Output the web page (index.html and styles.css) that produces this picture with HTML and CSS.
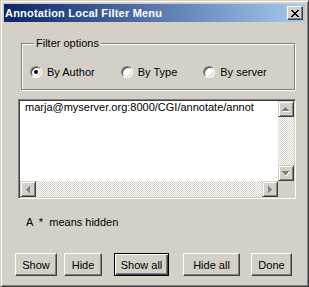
FILE: index.html
```html
<!DOCTYPE html>
<html lang="en">

<head>
    <meta charset="UTF-8">
    <title>Annotation Local Filter Menu</title>
    <link rel="stylesheet" href="styles.css">
</head>

<body>

    <div class="window">
        <div class="titlebar">
            <span class="title">Annotation Local Filter Menu</span>
            <button class="close-btn">
                <svg width="8" height="7" viewBox="0 0 8 7" shape-rendering="crispEdges">
                    <rect x="0" y="0" width="2" height="1" />
                    <rect x="6" y="0" width="2" height="1" />
                    <rect x="1" y="1" width="2" height="1" />
                    <rect x="5" y="1" width="2" height="1" />
                    <rect x="2" y="2" width="4" height="1" />
                    <rect x="3" y="3" width="2" height="1" />
                    <rect x="2" y="4" width="4" height="1" />
                    <rect x="1" y="5" width="2" height="1" />
                    <rect x="5" y="5" width="2" height="1" />
                    <rect x="0" y="6" width="2" height="1" />
                    <rect x="6" y="6" width="2" height="1" />
                </svg>
            </button>
        </div>

        <div class="content">
            <fieldset class="filter-box">
                <legend>Filter options</legend>
                <div class="radio-row">
                    <label class="radio"><span class="radio-mark"><span class="radio-dot"></span></span>By Author</label>
                    <label class="radio"><span class="radio-mark"></span>By Type</label>
                    <label class="radio"><span class="radio-mark"></span>By server</label>
                </div>
            </fieldset>

            <div class="listbox">
                <div class="list-items">
                    <div class="list-item">marja@myserver.org:8000/CGI/annotate/annot</div>
                </div>
                <div class="vscroll">
                    <div class="scroll-btn">
                        <svg width="8" height="5" viewBox="0 0 8 5" shape-rendering="crispEdges">
                            <rect class="arrow-hi" x="4" y="1" width="1" height="1" />
                            <rect class="arrow-hi" x="5" y="2" width="1" height="1" />
                            <rect class="arrow-hi" x="1" y="4" width="7" height="1" />
                            <rect x="3" y="0" width="1" height="1" />
                            <rect x="2" y="1" width="3" height="1" />
                            <rect x="1" y="2" width="5" height="1" />
                            <rect x="0" y="3" width="7" height="1" />
                        </svg>
                    </div>
                    <div class="scroll-track"></div>
                    <div class="scroll-btn">
                        <svg width="8" height="5" viewBox="0 0 8 5" shape-rendering="crispEdges">
                            <rect class="arrow-hi" x="1" y="1" width="7" height="1" />
                            <rect class="arrow-hi" x="6" y="2" width="1" height="1" />
                            <rect class="arrow-hi" x="5" y="3" width="1" height="1" />
                            <rect class="arrow-hi" x="4" y="4" width="1" height="1" />
                            <rect x="0" y="0" width="7" height="1" />
                            <rect x="1" y="1" width="5" height="1" />
                            <rect x="2" y="2" width="3" height="1" />
                            <rect x="3" y="3" width="1" height="1" />
                        </svg>
                    </div>
                </div>
                <div class="hscroll">
                    <div class="scroll-btn">
                        <svg width="4" height="7" viewBox="0 0 4 7" shape-rendering="crispEdges">
                            <rect x="3" y="0" width="1" height="7" />
                            <rect x="2" y="1" width="1" height="5" />
                            <rect x="1" y="2" width="1" height="3" />
                            <rect x="0" y="3" width="1" height="1" />
                        </svg>
                    </div>
                    <div class="scroll-track"></div>
                    <div class="scroll-btn">
                        <svg width="4" height="7" viewBox="0 0 4 7" shape-rendering="crispEdges">
                            <rect x="0" y="0" width="1" height="7" />
                            <rect x="1" y="1" width="1" height="5" />
                            <rect x="2" y="2" width="1" height="3" />
                            <rect x="3" y="3" width="1" height="1" />
                        </svg>
                    </div>
                </div>
                <div class="scroll-corner"></div>
            </div>

            <p class="hint">A  *  means hidden</p>

            <div class="button-row">
                <button class="btn btn-show">Show</button>
                <button class="btn btn-hide">Hide</button>
                <button class="btn btn-showall default">Show all</button>
                <button class="btn btn-hideall">Hide all</button>
                <button class="btn btn-done">Done</button>
            </div>
        </div>
    </div>

</body>

</html>
```

FILE: styles.css
```css
body {
    margin: 0;
    padding: 0;
    background-color: #d4d0c8;
    font-family: "Liberation Sans", Arial, sans-serif;
    font-size: 11px;
    color: #000;
}

.window {
    width: 309px;
    height: 287px;
    box-sizing: border-box;
    padding: 3px;
    border: 1px solid;
    border-color: #d4d0c8 #404040 #404040 #d4d0c8;
    box-shadow: inset 1px 1px #fff, inset -1px -1px #808080;
    background-color: #d4d0c8;
}

/* title bar */
.titlebar {
    height: 18px;
    display: flex;
    align-items: center;
    justify-content: space-between;
    padding: 0 2px 0 1px;
    background: linear-gradient(to right, #0a246a, #a6caf0);
}

.title {
    color: #fff;
    font-weight: bold;
    font-size: 11px;
    letter-spacing: 0.2px;
}

.close-btn {
    width: 16px;
    height: 14px;
    padding: 0;
    display: flex;
    align-items: center;
    justify-content: center;
    background-color: #d4d0c8;
    border: 1px solid;
    border-color: #fff #404040 #404040 #fff;
    box-shadow: inset -1px -1px #808080;
}

/* dialog content */
.content {
    padding: 0 0 0 14px;
}

.filter-box {
    width: 274px;
    box-sizing: border-box;
    margin: 15px 0 0 3px;
    padding: 16px 0 11px 8px;
    border: 1px solid #808080;
    box-shadow: inset 1px 1px #fff, 1px 1px #fff;
}

.filter-box legend {
    padding: 0 2px;
    margin-left: 4px;
    line-height: 13px;
    background-color: #d4d0c8;
}

.radio-row {
    display: flex;
    gap: 26px;
    height: 12px;
    align-items: center;
}

.radio {
    display: flex;
    align-items: center;
    gap: 5px;
    line-height: 12px;
}

.radio-mark {
    width: 12px;
    height: 12px;
    box-sizing: border-box;
    border-radius: 50%;
    border: 1px solid;
    border-color: #808080 #fff #fff #808080;
    background-color: #fff;
    box-shadow: inset 1px 1px #404040, inset -1px -1px #d4d0c8;
    display: flex;
    align-items: center;
    justify-content: center;
}

.radio-dot {
    width: 4px;
    height: 4px;
    border-radius: 50%;
    background-color: #000;
}

/* list with scrollbars */
.listbox {
    width: 278px;
    height: 100px;
    box-sizing: border-box;
    margin-top: 9px;
    border: 1px solid;
    border-color: #808080 #fff #fff #808080;
    box-shadow: inset 1px 1px #404040, inset -1px -1px #d4d0c8;
    padding: 1px;
    background-color: #fff;
    display: grid;
    grid-template-columns: 1fr 16px;
    grid-template-rows: 1fr 16px;
}

.list-items {
    padding-left: 5px;
}

.list-item {
    white-space: nowrap;
    line-height: 13px;
}

.vscroll {
    display: flex;
    flex-direction: column;
}

.hscroll {
    display: flex;
}

.scroll-btn {
    width: 16px;
    height: 16px;
    box-sizing: border-box;
    flex-shrink: 0;
    display: flex;
    align-items: center;
    justify-content: center;
    background-color: #d4d0c8;
    border: 1px solid;
    border-color: #d4d0c8 #404040 #404040 #d4d0c8;
    box-shadow: inset 1px 1px #fff, inset -1px -1px #808080;
}

.scroll-btn svg {
    fill: #808080;
}

.scroll-btn .arrow-hi {
    fill: #fff;
}

.scroll-track {
    flex: 1;
    background-color: #fff;
    background-image: repeating-conic-gradient(#d4d0c8 0 25%, #fff 0 50%);
    background-size: 2px 2px;
}

.scroll-corner {
    background-color: #d4d0c8;
}

.hint {
    margin: 17px 0 0 8px;
    line-height: 13px;
    white-space: pre;
}

/* bottom buttons */
.button-row {
    display: flex;
    margin-top: 24px;
}

.btn {
    height: 23px;
    padding: 0;
    box-sizing: border-box;
    font-family: "Liberation Sans", Arial, sans-serif;
    font-size: 11px;
    color: #000;
    background-color: #d4d0c8;
    border: 1px solid;
    border-color: #fff #404040 #404040 #fff;
    box-shadow: inset -1px -1px #808080;
}

.btn.default {
    border: 1px solid #000;
    box-shadow: inset 1px 1px #fff, inset -1px -1px #404040, inset -2px -2px #808080;
}

.btn-show {
    width: 42px;
    margin-left: -3px;
}

.btn-hide {
    width: 38px;
    margin-left: 7px;
}

.btn-showall {
    width: 55px;
    margin-left: 12px;
}

.btn-hideall {
    width: 57px;
    margin-left: 14px;
}

.btn-done {
    width: 41px;
    margin-left: 11px;
}
```
